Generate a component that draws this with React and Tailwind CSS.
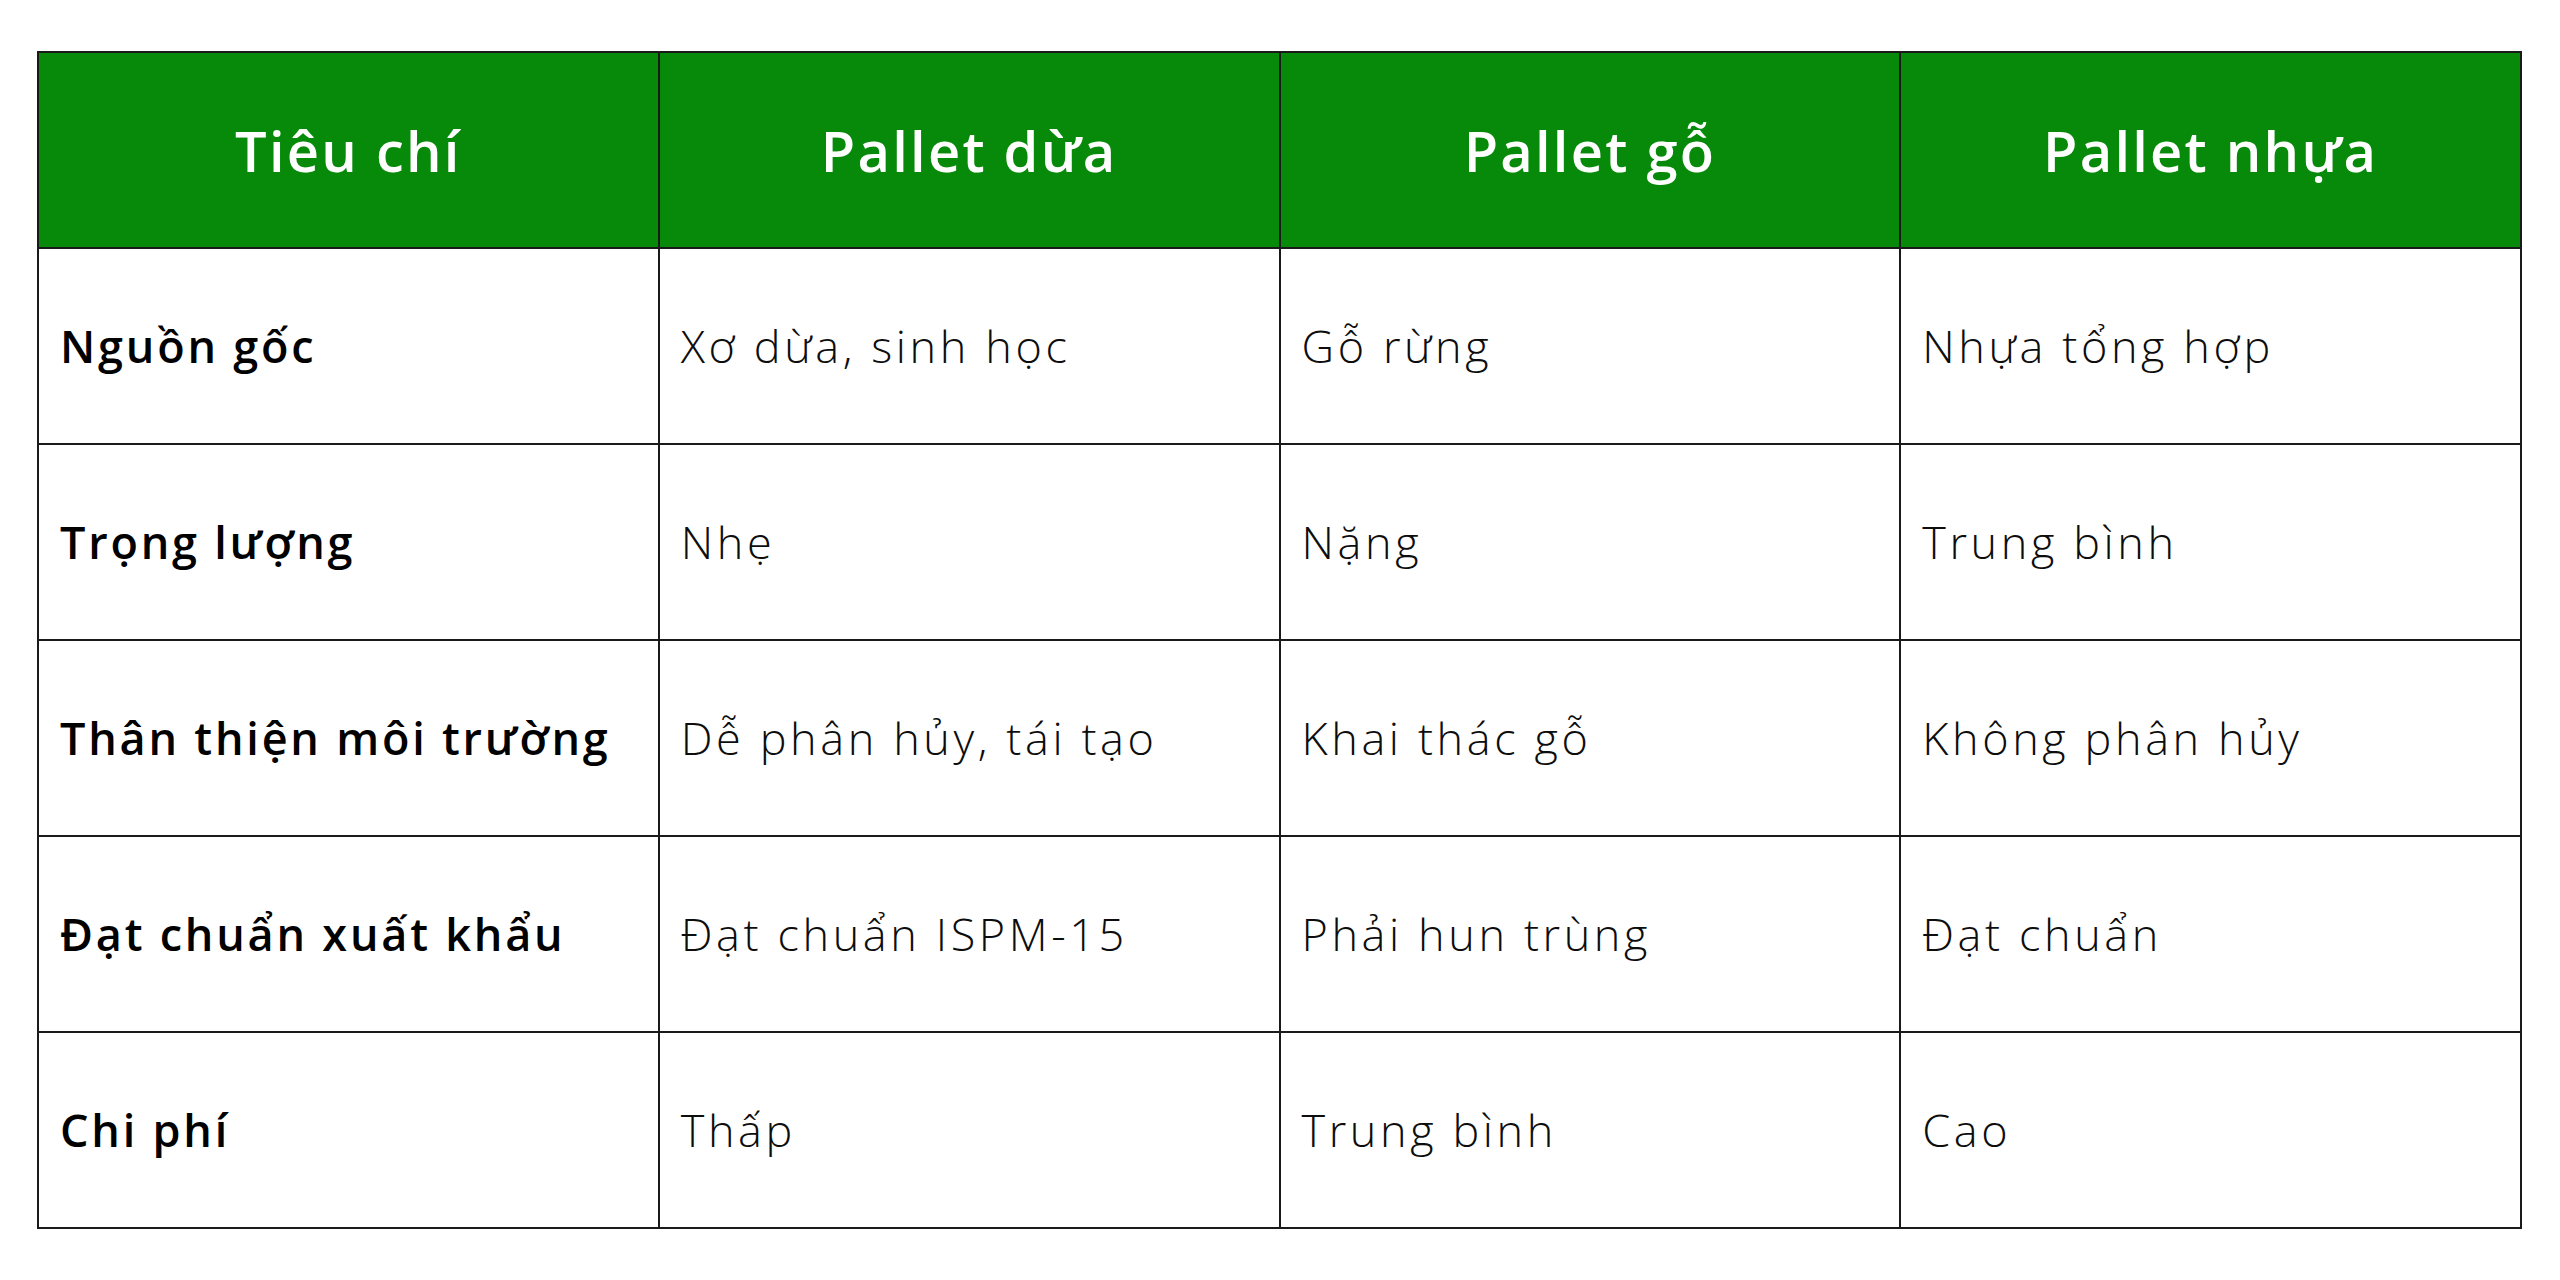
const headers = ["Tiêu chí", "Pallet dừa", "Pallet gỗ", "Pallet nhựa"];

const rows = [
  ["Nguồn gốc", "Xơ dừa, sinh học", "Gỗ rừng", "Nhựa tổng hợp"],
  ["Trọng lượng", "Nhẹ", "Nặng", "Trung bình"],
  ["Thân thiện môi trường", "Dễ phân hủy, tái tạo", "Khai thác gỗ", "Không phân hủy"],
  ["Đạt chuẩn xuất khẩu", "Đạt chuẩn ISPM-15", "Phải hun trùng", "Đạt chuẩn"],
  ["Chi phí", "Thấp", "Trung bình", "Cao"],
];

export default function App() {
  return (
    <div className="w-[2560px] h-[1280px] bg-white pt-[51px] pl-[37px] font-['Open_Sans','Liberation_Sans',sans-serif]">
      <table className="w-[2485px] table-fixed border-collapse border-2 border-[#1a1a1a]">
        <thead>
          <tr className="h-[196px] bg-[#078a0a]">
            {headers.map((h) => (
              <th
                key={h}
                className="border-2 border-[#1a1a1a] text-center align-middle text-[56px] font-semibold tracking-[0.04em] text-white"
              >
                {h}
              </th>
            ))}
          </tr>
        </thead>
        <tbody>
          {rows.map((row) => (
            <tr key={row[0]} className="h-[196px]">
              {row.map((cell, i) => (
                <td
                  key={i}
                  className={
                    i === 0
                      ? "border-2 border-[#1a1a1a] px-[21px] align-middle text-[45px] font-semibold tracking-[0.062em] text-black"
                      : "border-2 border-[#1a1a1a] px-[21px] align-middle text-[45px] font-light tracking-[0.08em] text-[#0d0d0d]"
                  }
                >
                  {cell}
                </td>
              ))}
            </tr>
          ))}
        </tbody>
      </table>
    </div>
  );
}
